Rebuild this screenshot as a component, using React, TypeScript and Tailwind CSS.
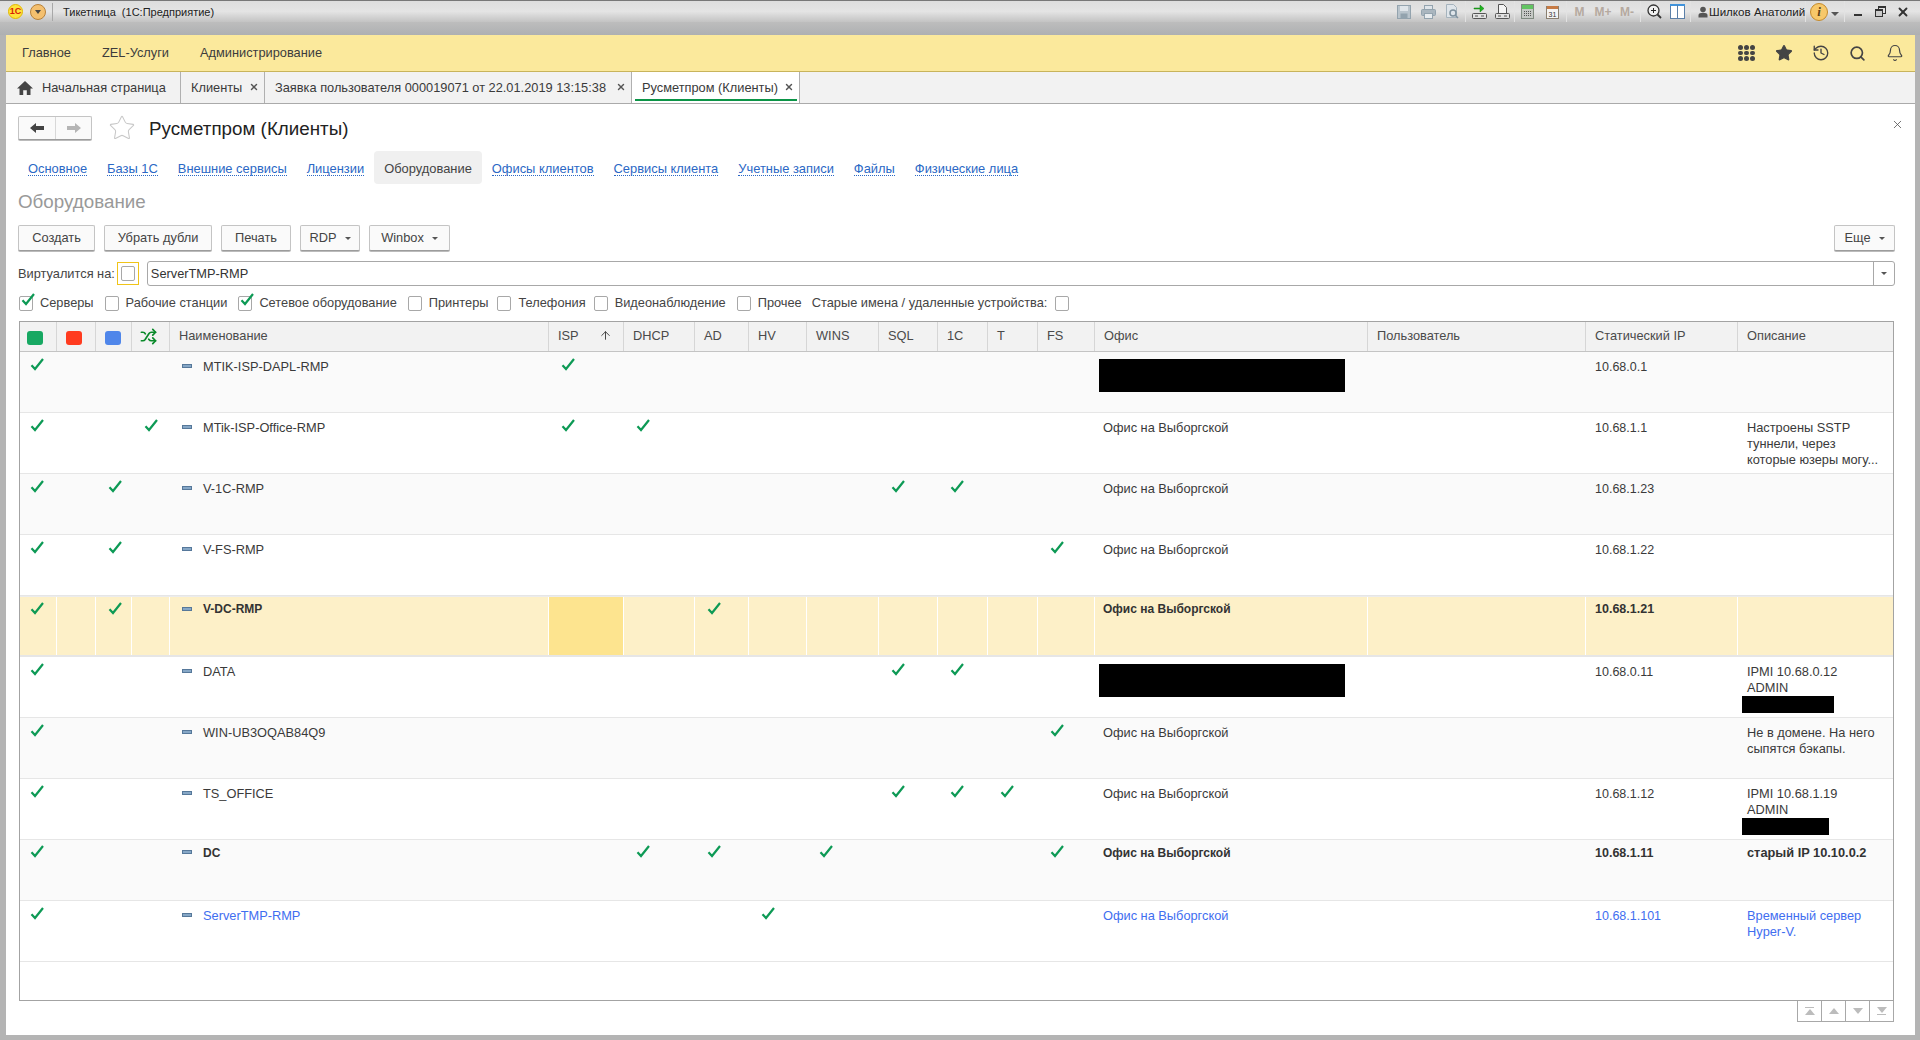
import React from 'react';
import { ArrowUp, Bell, History, Search, Shuffle, Star, X } from 'lucide-react';

const COLS =
  'grid grid-cols-[37px_39px_36px_38px_379px_75px_71px_54px_58px_72px_59px_50px_50px_57px_273px_218px_152px_155px]';

type Row = {
  name: string;
  checks: number[];
  office?: string;
  officeHidden?: boolean;
  ip?: string;
  desc?: string[];
  descHidden?: number;
  kind?: 'selected' | 'bold' | 'blue';
};

// column numbers: 0-3 flags, 5-13 roles
const OFFICE = 'Офис на Выборгской';
const rows: Row[] = [
  { name: 'MTIK-ISP-DAPL-RMP', checks: [0, 5], officeHidden: true, ip: '10.68.0.1' },
  {
    name: 'MTik-ISP-Office-RMP',
    checks: [0, 3, 5, 6],
    office: OFFICE,
    ip: '10.68.1.1',
    desc: ['Настроены SSTP', 'туннели, через', 'которые юзеры могу...'],
  },
  { name: 'V-1C-RMP', checks: [0, 2, 10, 11], office: OFFICE, ip: '10.68.1.23' },
  { name: 'V-FS-RMP', checks: [0, 2, 13], office: OFFICE, ip: '10.68.1.22' },
  { name: 'V-DC-RMP', checks: [0, 2, 7], office: OFFICE, ip: '10.68.1.21', kind: 'selected' },
  {
    name: 'DATA',
    checks: [0, 10, 11],
    officeHidden: true,
    ip: '10.68.0.11',
    desc: ['IPMI 10.68.0.12', 'ADMIN'],
    descHidden: 92,
  },
  {
    name: 'WIN-UB3OQAB84Q9',
    checks: [0, 13],
    office: OFFICE,
    desc: ['Не в домене. На него', 'сыпятся бэкапы.'],
  },
  {
    name: 'TS_OFFICE',
    checks: [0, 10, 11, 12],
    office: OFFICE,
    ip: '10.68.1.12',
    desc: ['IPMI 10.68.1.19', 'ADMIN'],
    descHidden: 87,
  },
  {
    name: 'DC',
    checks: [0, 6, 7, 9, 13],
    office: OFFICE,
    ip: '10.68.1.11',
    desc: ['старый IP 10.10.0.2'],
    kind: 'bold',
  },
  {
    name: 'ServerTMP-RMP',
    checks: [0, 8],
    office: OFFICE,
    ip: '10.68.1.101',
    desc: ['Временный сервер', 'Hyper-V.'],
    kind: 'blue',
  },
];

function Tick() {
  return (
    <svg width="15" height="13" viewBox="0 0 15 13" className="block">
      <path d="M1.5 7.2 L5 11 L13 1" fill="none" stroke="#0d9a55" strokeWidth="2.2" />
    </svg>
  );
}

function Sep() {
  return <div className="mx-[1px] h-[22px] w-px bg-[#a8a8a8] border-r border-[#e2e2e2]" />;
}

function Slot({ w, children }: { w: number; children: React.ReactNode }) {
  return (
    <div className="flex h-[22px] items-center justify-center" style={{ width: w }}>
      {children}
    </div>
  );
}

function TitleBar() {
  return (
    <div className="flex h-[22px] items-center bg-linear-to-b from-[#dddddd] via-[#e4e4e4] to-[#c3c3c3] border-t border-[#777]">
      <div className="ml-[8px] flex h-[15px] w-[15px] items-center justify-center rounded-full border border-[#e2b800] bg-[#ffe23c] text-[9px] font-bold leading-none text-[#d81e05]">
        1С
      </div>
      <div className="ml-[7px] flex h-[16px] w-[16px] items-center justify-center rounded-full border border-[#b8823a] bg-[#f4c06f]">
        <div className="h-0 w-0 border-x-[3px] border-t-[4px] border-x-transparent border-t-[#444]" />
      </div>
      <div className="ml-[6px] mr-[10px] h-[18px] w-px bg-[#a8a8a8]" />
      <span className="mt-[1px] text-[11px] text-[#222]">Тикетница&nbsp; (1С:Предприятие)</span>
      <div className="ml-auto flex items-center">
        <Slot w={24}>
          <svg width="14" height="14" viewBox="0 0 14 14">
            <rect x="0.5" y="0.5" width="13" height="13" fill="#b9c4cc" stroke="#93a3ae" />
            <rect x="3" y="1" width="8" height="5" fill="#dfe5ea" />
            <rect x="3.5" y="8.5" width="7" height="5" fill="#93a3ae" />
          </svg>
        </Slot>
        <Slot w={24}>
          <svg width="15" height="14" viewBox="0 0 15 14">
            <rect x="3.5" y="0.5" width="8" height="5" fill="#dfe5ea" stroke="#93a3ae" />
            <rect x="0.5" y="4.5" width="14" height="6" rx="1" fill="#aab6bf" stroke="#93a3ae" />
            <rect x="3.5" y="8.5" width="8" height="5" fill="#e8ecef" stroke="#93a3ae" />
          </svg>
        </Slot>
        <Slot w={24}>
          <svg width="15" height="15" viewBox="0 0 15 15">
            <path d="M1.5 .5h7l3 3v10h-10z" fill="#dfe5ea" stroke="#a5b3bd" />
            <circle cx="8" cy="9" r="3" fill="none" stroke="#7f919e" strokeWidth="1.5" />
            <path d="M10 11l3 3" stroke="#7f919e" strokeWidth="1.5" />
          </svg>
        </Slot>
        <Sep />
        <Slot w={24}>
          <svg width="15" height="16" viewBox="0 0 15 16">
            <path d="M2 4h6V1l4 3.5L8 8V5H2z" fill="#1fb51f" stroke="#137a13" strokeWidth="0.5" />
            <rect x="0.5" y="9.5" width="14" height="5" rx="1" fill="#e2e2e2" stroke="#555" />
            <path d="M3 12h3M9 12h3" stroke="#555" />
          </svg>
        </Slot>
        <Slot w={22}>
          <svg width="15" height="16" viewBox="0 0 15 16">
            <path d="M3.5 .5h5l3 3v6h-8z" fill="#f4f4f4" stroke="#555" />
            <rect x="0.5" y="9.5" width="14" height="5" rx="1" fill="#e2e2e2" stroke="#555" />
            <path d="M3 12h3M9 12h3" stroke="#555" />
          </svg>
        </Slot>
        <Sep />
        <Slot w={23}>
          <svg width="13" height="15" viewBox="0 0 13 15">
            <rect x="0.5" y="0.5" width="12" height="14" fill="#c6c9c6" stroke="#7f8a80" />
            <rect x="1" y="1" width="11" height="4" fill="#62c462" />
            <path d="M3 7.5h7M3 9.5h7M3 11.5h7" stroke="#555" strokeDasharray="1 1" />
          </svg>
        </Slot>
        <Slot w={26}>
          <svg width="13" height="15" viewBox="0 0 13 15">
            <rect x="0.5" y="2.5" width="12" height="12" fill="#f4f4f4" stroke="#8a7f70" />
            <rect x="1" y="2" width="11" height="3" fill="#c77b45" />
            <text x="6.5" y="12.5" textAnchor="middle" fontSize="7" fill="#333">
              31
            </text>
          </svg>
        </Slot>
        <Sep />
        <Slot w={23}>
          <span className="text-[12px] font-bold text-[#b5a99f]">M</span>
        </Slot>
        <Slot w={24}>
          <span className="text-[12px] font-bold text-[#b5a99f]">M+</span>
        </Slot>
        <Slot w={24}>
          <span className="text-[12px] font-bold text-[#b5a99f]">M-</span>
        </Slot>
        <Sep />
        <Slot w={24}>
          <svg width="15" height="15" viewBox="0 0 15 15">
            <circle cx="6.5" cy="6.5" r="5.5" fill="#f0f0f0" stroke="#333" strokeWidth="1.3" />
            <path d="M4 6.5h5M6.5 4v5" stroke="#222" />
            <path d="M10.5 10.5l3.5 3.5" stroke="#333" strokeWidth="1.8" />
          </svg>
        </Slot>
        <Slot w={23}>
          <svg width="15" height="15" viewBox="0 0 15 15">
            <rect x="0.5" y="0.5" width="14" height="14" fill="#fff" stroke="#5a7fa8" />
            <rect x="0" y="0" width="15" height="2" fill="#3f93dc" />
            <path d="M7.5 1v14" stroke="#5a7fa8" />
          </svg>
        </Slot>
        <Sep />
        <svg width="10" height="12" viewBox="0 0 10 12" className="ml-[6px]">
          <circle cx="5" cy="3.5" r="2.8" fill="#555" />
          <path d="M0.5 11.5v-2.5c0-1.5 2-2.3 4.5-2.3s4.5.8 4.5 2.3v2.5z" fill="#555" />
        </svg>
        <span className="ml-[1px] w-[95px] whitespace-nowrap text-[11.6px] text-[#222]">Шилков Анатолий</span>
        <Sep />
        <div className="ml-[3px] flex h-[18px] w-[18px] items-center justify-center rounded-full border border-[#c48a2c] bg-[#f7c86a] text-[13px] font-bold italic leading-none text-[#5c4218] font-['Liberation_Serif',serif]">
          i
        </div>
        <div className="ml-[3px] mt-[5px] h-0 w-0 border-x-[4px] border-t-[4px] border-x-transparent border-t-[#555]" />
        <div className="ml-[4px]">
          <Sep />
        </div>
        <Slot w={24}>
          <div className="mt-[7px] h-[2px] w-[8px] bg-[#333]" />
        </Slot>
        <Slot w={20}>
          <div className="relative h-[11px] w-[11px]">
            <div className="absolute right-0 top-0 h-[8px] w-[8px] border border-t-2 border-[#333]" />
            <div className="absolute bottom-0 left-0 h-[8px] w-[8px] border border-t-2 border-[#333] bg-[#ccc]" />
          </div>
        </Slot>
        <Slot w={26}>
          <X size={14} strokeWidth={3.2} className="text-[#333]" />
        </Slot>
        <div className="w-[4px]" />
      </div>
    </div>
  );
}

function MenuBar() {
  return (
    <div className="flex h-[37px] items-center border-b border-[#c8b45c] bg-[#fbe99c] pl-[16px] pr-[2px] text-[#3c3c3c]">
      <span className="mr-[31px]">Главное</span>
      <span className="mr-[31px]">ZEL-Услуги</span>
      <span>Администрирование</span>
      <div className="ml-auto flex items-center text-[#444]">
        <div className="grid w-[37px] place-items-center">
          <div className="grid grid-cols-3 gap-[1.2px]">
            {Array.from({ length: 9 }).map((_, i) => (
              <div key={i} className="h-[4.6px] w-[4.6px] rounded-full bg-[#444]" />
            ))}
          </div>
        </div>
        <div className="grid w-[37px] place-items-center">
          <Star size={18} fill="#444" strokeWidth={1.5} />
        </div>
        <div className="grid w-[37px] place-items-center">
          <History size={18} strokeWidth={1.8} />
        </div>
        <div className="grid w-[37px] place-items-center">
          <Search size={17} strokeWidth={2.4} />
        </div>
        <div className="grid w-[37px] place-items-center">
          <Bell size={18} strokeWidth={1.6} />
        </div>
      </div>
    </div>
  );
}

function Tab({ label, active, w }: { label: string; active?: boolean; w: number }) {
  return (
    <div
      className={
        'relative flex h-full items-center border-r border-[#b0b0b0] pl-[10px] ' + (active ? 'bg-white' : '')
      }
      style={{ width: w }}
    >
      <span className="text-[#3a3a3a]">{label}</span>
      <X size={10} strokeWidth={3.4} className="absolute right-[5px] top-[10px] text-[#555]" />
      {active && <div className="absolute bottom-[2px] left-[3px] right-[2px] h-[2px] bg-[#0b9447]" />}
    </div>
  );
}

function TabBar() {
  return (
    <div className="flex h-[32px] border-b border-[#aaaaaa] bg-[#f2f2f2]">
      <div className="flex h-full w-[175px] items-center border-r border-[#b0b0b0] pl-[11px]">
        <svg width="16" height="14" viewBox="0 0 16 14">
          <path d="M8 0 L16 7.5 H13.5 V14 H9.8 V9.2 H6.2 V14 H2.5 V7.5 H0 Z" fill="#444" />
        </svg>
        <span className="ml-[9px] text-[#3a3a3a]">Начальная страница</span>
      </div>
      <Tab label="Клиенты" w={84} />
      <Tab label="Заявка пользователя 000019071 от 22.01.2019 13:15:38" w={367} />
      <Tab label="Русметпром (Клиенты)" active w={168} />
    </div>
  );
}

const links = [
  'Основное',
  'Базы 1С',
  'Внешние сервисы',
  'Лицензии',
  'Оборудование',
  'Офисы клиентов',
  'Сервисы клиента',
  'Учетные записи',
  'Файлы',
  'Физические лица',
];

function Button({ label, w, arrow }: { label: string; w: number; arrow?: boolean }) {
  return (
    <div
      className="flex h-[26px] items-center justify-center gap-[8px] rounded-[2px] border border-[#c4c4c4] border-b-[#9c9c9c] bg-[#fafafa] text-[#444] shadow-[0_1px_0_#bbbbbb]"
      style={{ width: w }}
    >
      <span>{label}</span>
      {arrow && <div className="mt-[1px] h-0 w-0 border-x-[3px] border-t-[3px] border-x-transparent border-t-[#555]" />}
    </div>
  );
}

function Box({ on, label, ml }: { on?: boolean; label: string; ml: number }) {
  return (
    <div className="flex items-center" style={{ marginLeft: ml }}>
      <div className="relative h-[15px] w-[14px] rounded-[2px] border border-[#a8a8a8] bg-white">
        {on && (
          <div className="absolute -top-[4px] left-[1px]">
            <Tick />
          </div>
        )}
      </div>
      <span className="ml-[7px] text-[#444]">{label}</span>
    </div>
  );
}

function TableHead() {
  const cell = 'flex h-[29px] items-center border-r border-[#d6d6d6] pb-[2px] pl-[9px] text-[#4a4a4a]';
  const flag = 'flex h-[29px] items-center border-r border-[#d6d6d6]';
  return (
    <div className={COLS + ' border-b border-[#c4c4c4] bg-[#f2f2f2]'}>
      <div className={flag + ' pl-[7px]'}>
        <div className="mt-[3px] h-[14px] w-[16px] rounded-[3px] bg-[#17a862]" />
      </div>
      <div className={flag + ' pl-[9px]'}>
        <div className="mt-[3px] h-[14px] w-[16px] rounded-[3px] bg-[#ff3b1f]" />
      </div>
      <div className={flag + ' pl-[9px]'}>
        <div className="mt-[3px] h-[14px] w-[16px] rounded-[3px] bg-[#4f86ea]" />
      </div>
      <div className={flag + ' pl-[8px]'}>
        <Shuffle size={17} strokeWidth={2.4} className="text-[#0a8a2a]" />
      </div>
      <div className={cell}>Наименование</div>
      <div className={cell}>
        ISP
        <ArrowUp size={13} strokeWidth={1.8} className="ml-[20px] text-[#444]" />
      </div>
      <div className={cell}>DHCP</div>
      <div className={cell}>AD</div>
      <div className={cell}>HV</div>
      <div className={cell}>WINS</div>
      <div className={cell}>SQL</div>
      <div className={cell}>1С</div>
      <div className={cell}>T</div>
      <div className={cell}>FS</div>
      <div className={cell}>Офис</div>
      <div className={cell}>Пользователь</div>
      <div className={cell}>Статический IP</div>
      <div className={cell + ' border-r-0'}>Описание</div>
    </div>
  );
}

function TableRow({ row, index }: { row: Row; index: number }) {
  const selected = row.kind === 'selected';
  const strong = selected || row.kind === 'bold';
  const bg = selected ? 'bg-[#fdf0c8]' : index % 2 === 0 ? 'bg-[#fafafa]' : 'bg-white';
  const tone = row.kind === 'blue' ? 'text-[#3f6ef0]' : strong ? 'font-bold text-[#333]' : 'text-[#3a3a3a]';
  const rule = selected ? 'border-r border-white' : '';
  const pad = selected ? 'pt-[4px]' : row.kind === 'bold' ? 'pt-[5px]' : 'pt-[7px]';
  const tickPad = selected ? 'pt-[5px]' : row.kind === 'bold' ? 'pt-[5px]' : 'pt-[6px]';
  const narrow = strong ? 'text-[12px]' : '';

  const cells = [];
  for (let c = 0; c < 18; c++) {
    if (c === 4) {
      cells.push(
        <div key={c} className={'flex items-start pl-[12px] ' + pad + ' ' + rule}>
          <div className={(selected ? 'mt-[6px] ' : 'mt-[5px] ') + 'h-[4px] w-[10px] border border-[#56789a] bg-[#86a7c6]'} />
          <span className={'ml-[11px] leading-[16px] ' + narrow}>{row.name}</span>
        </div>,
      );
    } else if (c === 14) {
      cells.push(
        <div key={c} className={'pl-[8px] leading-[16px] ' + narrow + ' ' + pad + ' ' + rule}>
          {row.officeHidden ? <div className="-ml-[4px] h-[33px] w-[246px] bg-black" /> : row.office}
        </div>,
      );
    } else if (c === 15) {
      cells.push(<div key={c} className={rule} />);
    } else if (c === 16) {
      cells.push(
        <div key={c} className={'pl-[9px] text-[12.5px] leading-[16px] ' + pad + ' ' + rule}>
          {row.ip}
        </div>,
      );
    } else if (c === 17) {
      cells.push(
        <div key={c} className={'pl-[9px] leading-[16px] ' + pad}>
          {row.desc?.map((line) => (
            <div key={line} className="whitespace-nowrap">
              {line}
            </div>
          ))}
          {row.descHidden && <div className="-ml-[5px] h-[17px] bg-black" style={{ width: row.descHidden }} />}
        </div>,
      );
    } else {
      const sorted = selected && c === 5;
      cells.push(
        <div
          key={c}
          className={(sorted ? 'bg-[#fde48f] ' : '') + (c === 0 ? 'pl-[10px] ' : 'pl-[12px] ') + tickPad + ' ' + rule}
        >
          {row.checks.includes(c) && <Tick />}
        </div>,
      );
    }
  }

  return (
    <div className={selected ? 'border-t border-b-2 border-[#ececec] border-b-[#e6e6e6]' : 'border-b border-[#e6e6e6]'}>
      <div className={COLS + ' ' + bg + ' ' + tone + (selected ? ' h-[58px]' : ' h-[60px]')}>{cells}</div>
    </div>
  );
}

function Table() {
  return (
    <div className="mx-px mt-[10px] flex h-[680px] flex-col border border-[#a3a3a3] bg-white">
      <TableHead />
      {rows.map((row, i) => (
        <TableRow key={row.name} row={row} index={i} />
      ))}
    </div>
  );
}

function Pager() {
  const cell = 'flex h-[20px] w-[24px] items-center justify-center border-r border-[#a8a8a8]';
  return (
    <div className="mr-px flex justify-end">
      <div className="flex border-b border-l border-[#a8a8a8]">
        <div className={cell}>
          <div className="flex flex-col items-center gap-[1px]">
            <div className="h-[1.5px] w-[9px] bg-[#bcbcbc]" />
            <div className="h-0 w-0 border-x-[5px] border-b-[6px] border-x-transparent border-b-[#bcbcbc]" />
          </div>
        </div>
        <div className={cell}>
          <div className="h-0 w-0 border-x-[5px] border-b-[6px] border-x-transparent border-b-[#bcbcbc]" />
        </div>
        <div className={cell}>
          <div className="h-0 w-0 border-x-[5px] border-t-[6px] border-x-transparent border-t-[#bcbcbc]" />
        </div>
        <div className={cell}>
          <div className="flex flex-col items-center gap-[1px]">
            <div className="h-0 w-0 border-x-[5px] border-t-[6px] border-x-transparent border-t-[#bcbcbc]" />
            <div className="h-[1.5px] w-[9px] bg-[#bcbcbc]" />
          </div>
        </div>
      </div>
    </div>
  );
}

export default function App() {
  return (
    <div className="flex h-[1040px] w-[1920px] flex-col overflow-hidden bg-[#b4b4b4] font-['Liberation_Sans',Arial,sans-serif] text-[12.8px] text-[#3a3a3a]">
      <TitleBar />
      <div className="h-[13px] bg-linear-to-b from-[#bdbdbd] to-[#aeb0b2]" />
      <div className="flex min-h-0 flex-1 flex-col pb-[5px] pl-[6px] pr-[5px]">
        <MenuBar />
        <TabBar />
        <div className="relative flex-1 bg-white pl-[12px] pr-[20px]">
          <div className="mt-[12px] flex h-[24px] items-center">
            <div className="flex h-[24px] w-[74px] rounded-[2px] border border-[#c4c4c4] border-b-[#9c9c9c] bg-[#fafafa] shadow-[0_1px_0_#bbbbbb]">
              <div className="flex w-[37px] items-center justify-center border-r border-[#d8d8d8]">
                <svg width="14" height="10" viewBox="0 0 14 10">
                  <path d="M0 5 L6 0 V3 H14 V7 H6 V10 Z" fill="#444" />
                </svg>
              </div>
              <div className="flex flex-1 items-center justify-center">
                <svg width="14" height="10" viewBox="0 0 14 10">
                  <path d="M14 5 L8 0 V3 H0 V7 H8 V10 Z" fill="#b5b5b5" />
                </svg>
              </div>
            </div>
            <Star size={28} strokeWidth={0.9} className="ml-[16px] text-[#c8c8c8]" />
            <span className="ml-[13px] pt-[2px] text-[18.8px] text-[#222]">Русметпром (Клиенты)</span>
            <X size={13} strokeWidth={1.5} className="absolute right-[11px] top-[14px] text-[#555]" />
          </div>

          <div className="mt-[11px] flex h-[33px] items-stretch text-[12.9px]">
            {links.map((l) =>
              l === 'Оборудование' ? (
                <div key={l} className="flex items-center rounded-[4px] bg-[#f0f0f0] px-[10px] pt-[2px] text-[#444]">
                  {l}
                </div>
              ) : (
                <div key={l} className="flex items-center px-[10px] pt-[2px]">
                  <span className="border-b border-dotted border-[#2b68c5] leading-[13px] text-[#2b68c5]">{l}</span>
                </div>
              ),
            )}
          </div>

          <div className="mt-[8px] h-[20px] text-[18.8px] leading-[20px] text-[#999999]">Оборудование</div>

          <div className="mt-[13px] flex h-[26px] gap-[9px]">
            <Button label="Создать" w={77} />
            <Button label="Убрать дубли" w={108} />
            <Button label="Печать" w={70} />
            <Button label="RDP" w={60} arrow />
            <Button label="Winbox" w={81} arrow />
            <div className="ml-auto">
              <Button label="Еще" w={61} arrow />
            </div>
          </div>

          <div className="mt-[10px] flex h-[25px] items-center">
            <span className="text-[#444]">Виртуалится на:</span>
            <div className="ml-[2px] flex h-[23px] w-[22px] items-center justify-center border border-[#f0c419]">
              <div className="h-[15px] w-[14px] rounded-[2px] border border-[#a8a8a8] bg-white" />
            </div>
            <div className="ml-[8px] flex h-[25px] flex-1 rounded-[3px] border border-[#a8a8a8] bg-white">
              <span className="flex-1 pl-[3px] leading-[23px] text-[#333]">ServerTMP-RMP</span>
              <div className="flex w-[21px] items-center justify-center border-l border-[#a8a8a8]">
                <div className="h-0 w-0 border-x-[3px] border-t-[3px] border-x-transparent border-t-[#555]" />
              </div>
            </div>
          </div>

          <div className="mt-[9px] flex h-[16px] items-center">
            <Box on label="Серверы" ml={1} />
            <Box label="Рабочие станции" ml={11} />
            <Box on label="Сетевое оборудование" ml={11} />
            <Box label="Принтеры" ml={11} />
            <Box label="Телефония" ml={9} />
            <Box label="Видеонаблюдение" ml={8} />
            <Box label="Прочее" ml={11} />
            <span className="ml-[10px] text-[#444]">Старые имена / удаленные устройства:</span>
            <div className="ml-[8px] h-[15px] w-[14px] rounded-[2px] border border-[#a8a8a8] bg-white" />
          </div>

          <Table />
          <Pager />
        </div>
      </div>
    </div>
  );
}
